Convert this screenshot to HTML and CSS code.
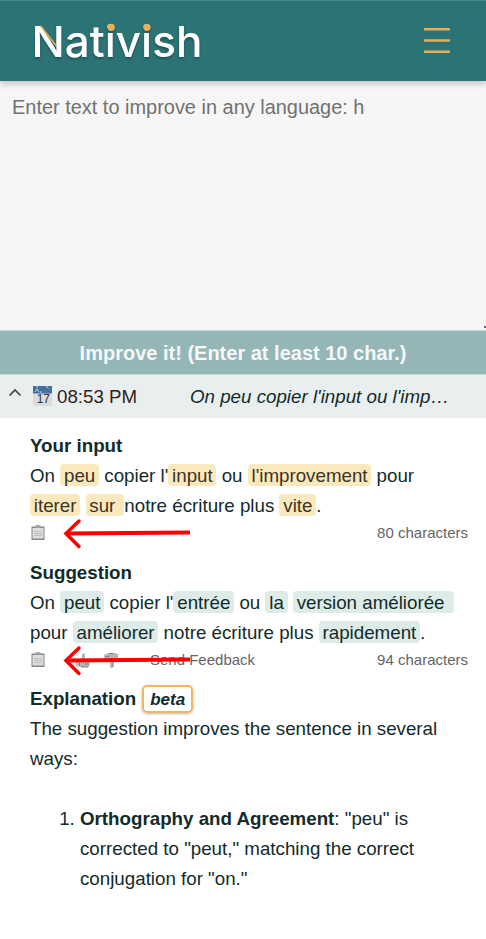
FILE: index.html
```html
<!DOCTYPE html>
<html lang="en">
<head>
<meta charset="utf-8">
<title>Nativish</title>
<link rel="stylesheet" href="styles.css">
</head>
<body>
<header class="header">
  <svg class="logo" width="190" height="62" viewBox="30 7 190 62">
    <text class="logo-text" x="31.400" y="57" textLength="171" lengthAdjust="spacingAndGlyphs">Nativish</text>
    <path d="M39.500 25.700h2L56.500 45v2.500z" fill="#edb057"/>
    <circle cx="111.200" cy="27.300" r="3.600" fill="#edb057"/>
    <circle cx="147" cy="27.300" r="3.600" fill="#edb057"/>
  </svg>
  <svg class="menu" width="26" height="28" viewBox="0 0 26 28"><path d="M0 2.300h26M0 13.500h26M0 24.700h26" stroke="#e9ad58" stroke-width="2.400"/></svg>
</header>
<div class="entry"><span>Enter text to improve in any language: h</span><i class="grip"></i></div>
<div class="improve">Improve it! (Enter at least 10 char.)</div>
<div class="summary">
  <svg class="chevron" width="14" height="9" viewBox="0 0 14 9"><path d="M1.500 7.500 7 2l5.500 5.500" fill="none" stroke="#444" stroke-width="1.700"/></svg>
  <svg class="calendar" width="19" height="20" viewBox="0 0 19 20"><path fill="#dcdcdc" d="M0 0h19v20H0z"/><path fill="#456f9f" d="M0 0h19v7.500H0z"/><path d="M2 6l2-3 2 3m1 0h2M4 0v2M13 0l2.500 2.500" stroke="#c3d4e6" fill="none"/><text class="day" x="3.700" y="17.300">17</text></svg>
  <span class="time">08:53 PM</span>
  <em class="preview">On peu copier l'input ou l'imp…</em>
</div>
<main class="content">
  <section class="block">
    <h2>Your input</h2>
    <p>On <mark>peu</mark> copier l'<mark>input</mark> ou <mark>l'improvement</mark> pour<br><mark>iterer</mark> <mark>sur </mark>notre écriture plus <mark>vite</mark>.</p>
    <div class="actions">
      <svg class="clip" width="14" height="16" viewBox="0 0 14 16"><path fill="#858585" d="M.5 1.500h13V15H.5z"/><path fill="#dedede" d="M1.500 3h11v10.500h-11z"/><path fill="#aaa" d="M4.500 0h5v2.500h-5z"/><path stroke="#bdbdbd" d="M3 6.500h8M3 8.500h8M3 10.500h8"/></svg>
      <span class="count">80 characters</span>
      <svg class="arrow" width="130" height="34" viewBox="0 0 130 34"><path d="M127 16.500 4 17.500"/><path class="head" d="M16 5 3 17.500 16 30.500"/></svg>
    </div>
  </section>
  <section class="block suggestion">
    <h2>Suggestion</h2>
    <p>On <mark>peut</mark> copier l'<mark>entrée</mark> ou <mark>la</mark> <mark>version améliorée&nbsp;</mark><br>pour <mark>améliorer</mark> notre écriture plus <mark>rapidement</mark>.</p>
    <div class="actions">
      <svg class="clip" width="14" height="16" viewBox="0 0 14 16"><path fill="#858585" d="M.5 1.500h13V15H.5z"/><path fill="#dedede" d="M1.500 3h11v10.500h-11z"/><path fill="#aaa" d="M4.500 0h5v2.500h-5z"/><path stroke="#bdbdbd" d="M3 6.500h8M3 8.500h8M3 10.500h8"/></svg>
      <svg class="thumb" width="14" height="15" viewBox="0 0 14 15"><path fill="#b5b5b5" d="M0 8h4l2-3V1q2-2 3 1v4h4l1 2-1 6H5l-5-1z"/><path stroke="#858585" fill="none" d="M9 8.500h4M9 11h4M5 14h7M3.500 8v5"/></svg>
      <svg class="thumb" width="14" height="15" viewBox="0 0 14 15"><path fill="#b5b5b5" d="M0 2l5-2h5l4 1v5h-4l-1 8q-2 2-3 0V8H1z"/><path stroke="#858585" fill="none" d="M1 3.500h4M1 6h4M5 .5h5M9 6v8"/></svg>
      <span class="feedback">Send Feedback</span>
      <span class="count">94 characters</span>
      <svg class="arrow" width="130" height="34" viewBox="0 0 130 34"><path d="M127 16.500 4 17.500"/><path class="head" d="M16 5 3 17.500 16 30.500"/></svg>
    </div>
  </section>
  <section class="explanation">
    <h2>Explanation <span class="beta">beta</span></h2>
    <p>The suggestion improves the sentence in several<br>ways:</p>
    <ol><li><b>Orthography and Agreement</b>: "peu" is<br>corrected to "peut," matching the correct<br>conjugation for "on."</li></ol>
  </section>
</main>
</body>
</html>
```

FILE: styles.css
```css
* { box-sizing: border-box; }
body { margin: 0; height: 939px; overflow: hidden; background: #fff; color: #122b2a; font: 18.740px/30px "Liberation Sans", Arial, sans-serif; }
h2, p, ol { margin: 0; padding: 0; font-size: inherit; }
.header { position: relative; z-index: 1; height: 81px; display: flex; justify-content: space-between; padding: 6px 36px 0 30px; background: #2b7375; border-top: 1px solid #4b8788; box-shadow: 0 2px 7px rgba(0,0,0,.25); }
.logo { filter: drop-shadow(0 2px 1px rgba(0,0,0,.25)); }
.logo-text { font: 500 43px Inter, sans-serif; fill: #fff; }
.menu { margin-top: 20px; }
.entry { height: 249px; padding: 11px 12px; position: relative; background: #f6f6f6; color: #717171; font-size: 19.960px; }
.grip { position: absolute; right: 0; bottom: 2px; width: 2px; height: 2px; background: #667; }
.improve { height: 45px; border: solid #c7d8d8; border-width: 1px 0; background: #94b6b7; color: #f4f8f8; text-align: center; font-weight: bold; font-size: 20px; line-height: 44px; }
.summary { height: 43px; display: flex; align-items: center; background: #e9efef; padding-left: 8px; }
.chevron { margin-top: -9px; }
.calendar { margin: -2px 5px 0 11px; }
.day { font: 12px "Liberation Sans", sans-serif; fill: #333; }
.time { color: #312116; width: 133px; }
.preview { white-space: nowrap; }
.content { padding: 13px 18px 0 30px; }
.block { height: 127px; }
mark { background: #f9e9bd; color: #3d3426; border-radius: 4px; padding: 1px 3.800px 0; }
.suggestion mark { background: #deece9; color: #122b2a; }
.actions { position: relative; display: flex; height: 24px; align-items: center; font-size: 15px; color: #656565; }
.clip { margin: -1px 31px 0 1px; }
.thumb { margin-right: 14px; }
.feedback { margin-left: 18px; }
.count { margin-left: auto; }
.arrow { position: absolute; left: 33px; top: -5px; }
.arrow path { fill: none; stroke: red; stroke-width: 4; }
.arrow .head { stroke-width: 3.500; stroke-linecap: round; }
.explanation { margin-top: -1px; }
.explanation h2 { display: flex; gap: 6px; }
.beta { border: 2px solid #f4b563; border-radius: 5px; font-size: 17px; font-style: italic; height: 28px; margin-top: 1px; line-height: 25px; padding: 0 6px; box-shadow: 0 1px 3px #bbb; }
ol { margin-top: 30px; padding-left: 50px; }
```
